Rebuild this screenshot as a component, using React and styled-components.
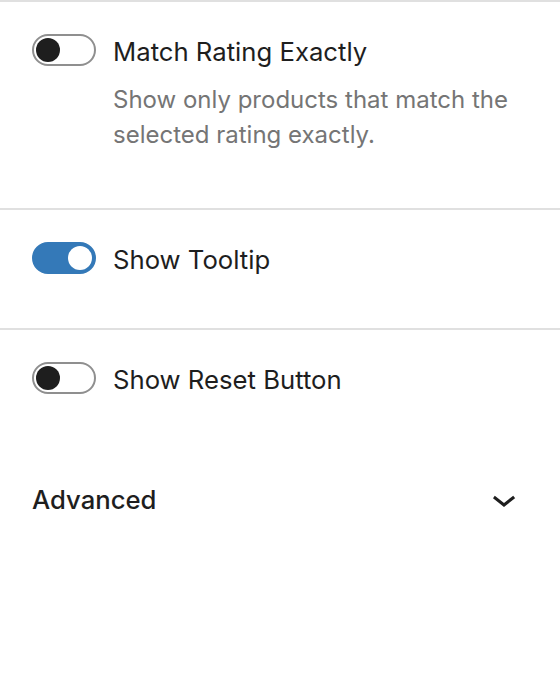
import React, { useState } from "react";
import styled, { createGlobalStyle } from "styled-components";

const GlobalStyle = createGlobalStyle`
  html, body {
    margin: 0;
    padding: 0;
    background: #fff;
  }
  body {
    font-family: "Inter", "Noto Sans", sans-serif;
    color: #1e1e1e;
    -webkit-font-smoothing: antialiased;
  }
`;

const toggles = [
  {
    id: "exact",
    label: "Match Rating Exactly",
    help: "Show only products that match the selected rating exactly.",
    on: false,
  },
  { id: "tooltip", label: "Show Tooltip", on: true },
  { id: "reset", label: "Show Reset Button", on: false },
];

const Sidebar = () => {
  const [state, setState] = useState(
    Object.fromEntries(toggles.map((t) => [t.id, t.on]))
  );

  return (
    <SidebarContainer>
      {toggles.map((t, i) => (
        <Panel
          key={t.id}
          $last={i === toggles.length - 1}
          $help={Boolean(t.help)}
        >
          <ToggleRow>
            <Track
              type="button"
              $on={state[t.id]}
              aria-pressed={state[t.id]}
              onClick={() => setState({ ...state, [t.id]: !state[t.id] })}
            >
              <Thumb $on={state[t.id]} />
            </Track>
            <Label>{t.label}</Label>
          </ToggleRow>
          {t.help && <Help>{t.help}</Help>}
        </Panel>
      ))}
      <AdvancedButton type="button">
        <span>Advanced</span>
        <svg width="48" height="48" viewBox="0 0 24 24" aria-hidden="true">
          <path
            d="M17.5 11.6L12 16l-5.5-4.4.9-1.2L12 14l4.6-3.6 1 1.2z"
            fill="#1e1e1e"
          />
        </svg>
      </AdvancedButton>
    </SidebarContainer>
  );
};

const SidebarContainer = styled.div`
  width: 560px;
  min-height: 700px;
  border-top: 2px solid #e0e0e0;
  box-sizing: border-box;
`;

const Panel = styled.section`
  padding: 32px 32px ${(p) => (p.$help ? "56px" : p.$last ? "57px" : "54px")};
  border-bottom: ${(p) => (p.$last ? "none" : "2px solid #e0e0e0")};
`;

const ToggleRow = styled.div`
  display: flex;
  align-items: center;
  gap: 17px;
  height: 32px;
`;

const Track = styled.button`
  position: relative;
  flex: none;
  width: 64px;
  height: 32px;
  padding: 0;
  border-radius: 16px;
  box-sizing: border-box;
  border: 2px solid ${(p) => (p.$on ? "#3479b8" : "#8f8f8f")};
  background: ${(p) => (p.$on ? "#3479b8" : "#fff")};
  cursor: pointer;
`;

const Thumb = styled.span`
  position: absolute;
  top: 2px;
  left: ${(p) => (p.$on ? "34px" : "2px")};
  width: 24px;
  height: 24px;
  border-radius: 50%;
  background: ${(p) => (p.$on ? "#fff" : "#1e1e1e")};
`;

const Label = styled.span`
  padding-top: 3px;
  font-size: 25.7px;
  line-height: 32px;
  color: #1e1e1e;
`;

const Help = styled.p`
  margin: 16px 0 0 81px;
  font-size: 24px;
  line-height: 35px;
  color: #757575;
`;

const AdvancedButton = styled.button`
  display: flex;
  align-items: center;
  justify-content: space-between;
  width: 100%;
  height: 96px;
  padding: 0 32px;
  border: none;
  background: none;
  font-family: inherit;
  font-size: 25.7px;
  font-weight: 500;
  color: #1e1e1e;
  cursor: pointer;
`;

export default function App() {
  return (
    <>
      <GlobalStyle />
      <Sidebar />
    </>
  );
}
